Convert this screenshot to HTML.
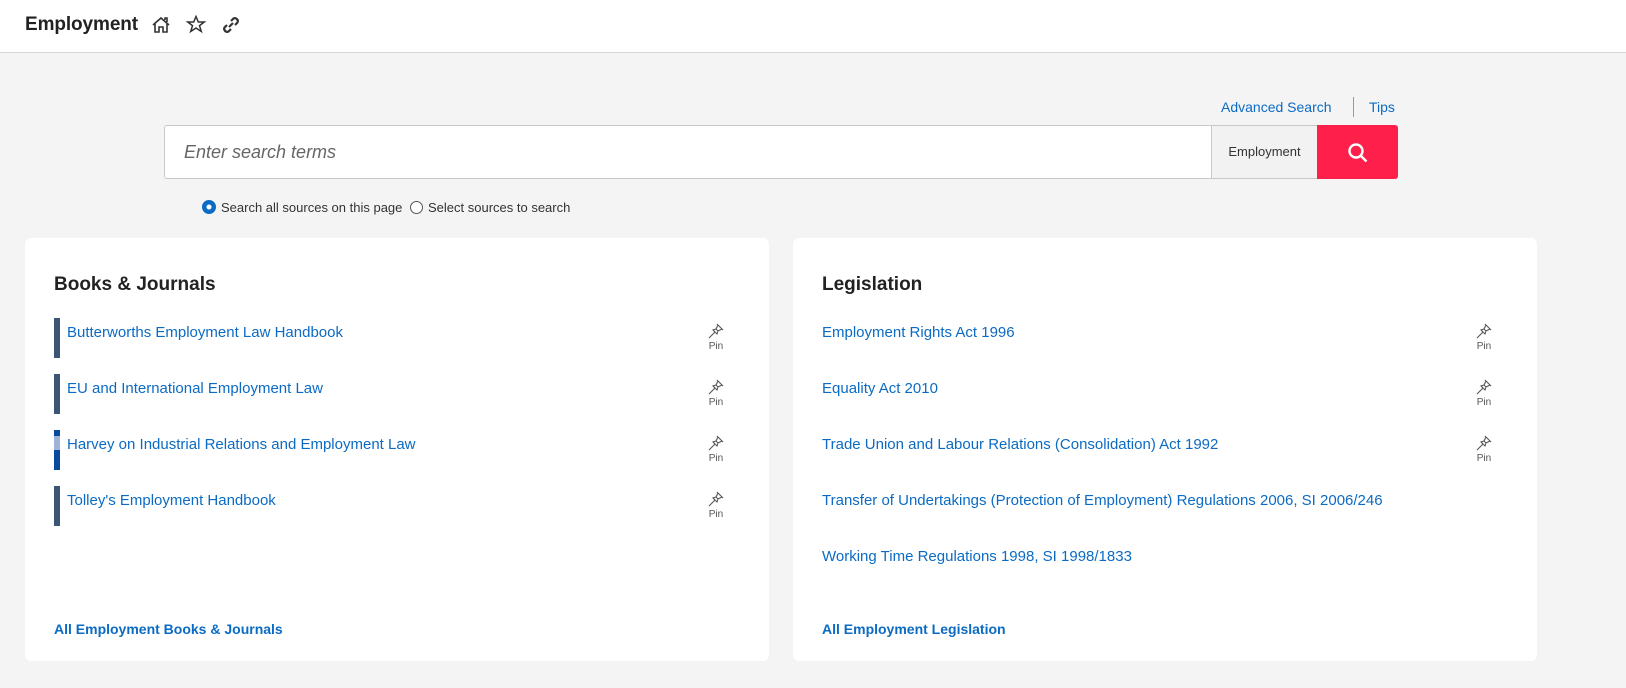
<!DOCTYPE html>
<html><head><meta charset="utf-8"><style>
body{margin:0;width:1626px;height:688px;background:#f4f4f4;font-family:"Liberation Sans",sans-serif;overflow:hidden;position:relative}
.hdr{position:absolute;left:0;top:0;width:1626px;height:52px;background:#fff;border-bottom:1px solid #d6d6d6}
.hdr h1{position:absolute;left:25px;top:14px;margin:0;font-size:19px;font-weight:bold;color:#222;letter-spacing:-0.1px}
.ab{position:absolute;font-size:14px;color:#0b6bc4}
.search{position:absolute;left:164px;top:125px;width:1232px;height:52px;background:#fff;border:1px solid #c8c8c8;border-radius:3px}
.search .ph{position:absolute;left:19px;top:16px;font-size:18px;font-style:italic;color:#666}
.search .lab{position:absolute;left:1046px;top:0;width:105px;height:52px;background:#f2f2f2;border-left:1px solid #c8c8c8;font-size:13px;color:#333;line-height:52px;text-align:center}
.search .btn{position:absolute;left:1152px;top:-1px;width:81px;height:54px;background:#ff1f4b;border-radius:0 3px 3px 0}
.radio{position:absolute;top:200px;font-size:13px;color:#333}
.card{position:absolute;top:238px;width:744px;height:423px;background:#fff;border-radius:6px}
.card h2{position:absolute;left:29px;top:36px;margin:0;font-size:19px;font-weight:bold;color:#222}
.item{position:absolute;left:29px;height:40px;width:690px}
.item .bar{position:absolute;left:0;top:0;width:6px;height:40px;background:#3b5675}
.item a{position:absolute;top:6px;font-size:15px;color:#0b6bc4;text-decoration:none}
.pin{position:absolute;left:650px;top:4px;width:24px;text-align:center;font-size:10px;color:#555;line-height:12px}
.pin svg{display:block;margin:0 auto 1px}
.all{position:absolute;left:29px;top:383px;font-size:14px;font-weight:bold;color:#0b6bc4}
</style></head><body>
<svg width="0" height="0" style="position:absolute"><defs><symbol id="p" viewBox="0 0 18 18"><g fill="none" stroke="#555" stroke-width="1.1"><path d="M10 2L16 8M11 3L9 7L11 9L15 7M9 7L6 8L10 12L11 9M8 10L2 16"/></g></symbol></defs></svg>
<div class="hdr"><h1>Employment</h1>
<svg style="position:absolute;left:151px;top:16px" width="20" height="18" viewBox="0 0 20 18" fill="none" stroke="#333" stroke-width="1.6"><path d="M2 9L10 2L18 9M4 8V16H8V11H12V16H16V8M14 4V2H16V6"/></svg>
<svg style="position:absolute;left:186px;top:15px" width="20" height="19" viewBox="0 0 20 19" fill="none" stroke="#333" stroke-width="1.5"><path d="M10 1.5L12.3 7H18.2L13.5 10.6L15.3 16.5L10 13L4.7 16.5L6.5 10.6L1.8 7H7.7Z"/></svg>
<svg style="position:absolute;left:221px;top:15px" width="20" height="20" viewBox="0 0 20 20" fill="none" stroke="#333" stroke-width="2.2"><path d="M8 12L12 8M6 10L3.5 12.5A3 3 0 0 0 7.5 16.5L10 14M10 6L12.5 3.5A3 3 0 0 1 16.5 7.5L14 10"/></svg>
</div>
<div class="ab" style="left:1221px;top:99px">Advanced Search</div>
<div style="position:absolute;left:1353px;top:97px;width:1px;height:20px;background:#999"></div>
<div class="ab" style="left:1369px;top:99px">Tips</div>
<div class="search"><div class="ph">Enter search terms</div><div class="lab">Employment</div>
<div class="btn"><svg style="position:absolute;left:30px;top:17px" width="22" height="22" viewBox="0 0 22 22" fill="none" stroke="#fff" stroke-width="2.4"><circle cx="9" cy="9" r="6.5"/><path d="M14 14L19.5 19.5"/></svg></div></div>
<div class="radio" style="left:202px"><span style="display:inline-block;width:10px;height:10px;border-radius:50%;border:2px solid #0b6bc4;background:radial-gradient(#fff 0 2px,#0b6bc4 3px);vertical-align:-2px;margin-right:5px"></span>Search all sources on this page</div>
<div class="radio" style="left:410px"><span style="display:inline-block;width:11px;height:11px;border-radius:50%;border:1px solid #555;background:#fff;vertical-align:-2px;margin-right:5px"></span>Select sources to search</div>

<div class="card" style="left:25px"><h2>Books &amp; Journals</h2>
<div class="item" style="top:80px"><div class="bar"></div><a style="left:13px">Butterworths Employment Law Handbook</a><div class="pin"><svg width="18" height="18"><use href="#p"/></svg>Pin</div></div>
<div class="item" style="top:136px"><div class="bar"></div><a style="left:13px">EU and International Employment Law</a><div class="pin"><svg width="18" height="18"><use href="#p"/></svg>Pin</div></div>
<div class="item" style="top:192px"><div class="bar" style="background:linear-gradient(#0a4a9c 0 6px,#9fb3d6 6px 20px,#0a4a9c 20px)"></div><a style="left:13px">Harvey on Industrial Relations and Employment Law</a><div class="pin"><svg width="18" height="18"><use href="#p"/></svg>Pin</div></div>
<div class="item" style="top:248px"><div class="bar"></div><a style="left:13px">Tolley's Employment Handbook</a><div class="pin"><svg width="18" height="18"><use href="#p"/></svg>Pin</div></div>
<div class="all">All Employment Books &amp; Journals</div></div>

<div class="card" style="left:793px"><h2>Legislation</h2>
<div class="item" style="top:80px"><a style="left:0">Employment Rights Act 1996</a><div class="pin"><svg width="18" height="18"><use href="#p"/></svg>Pin</div></div>
<div class="item" style="top:136px"><a style="left:0">Equality Act 2010</a><div class="pin"><svg width="18" height="18"><use href="#p"/></svg>Pin</div></div>
<div class="item" style="top:192px"><a style="left:0">Trade Union and Labour Relations (Consolidation) Act 1992</a><div class="pin"><svg width="18" height="18"><use href="#p"/></svg>Pin</div></div>
<div class="item" style="top:248px"><a style="left:0">Transfer of Undertakings (Protection of Employment) Regulations 2006, SI 2006/246</a></div>
<div class="item" style="top:304px"><a style="left:0">Working Time Regulations 1998, SI 1998/1833</a></div>
<div class="all">All Employment Legislation</div></div>
</body></html>
